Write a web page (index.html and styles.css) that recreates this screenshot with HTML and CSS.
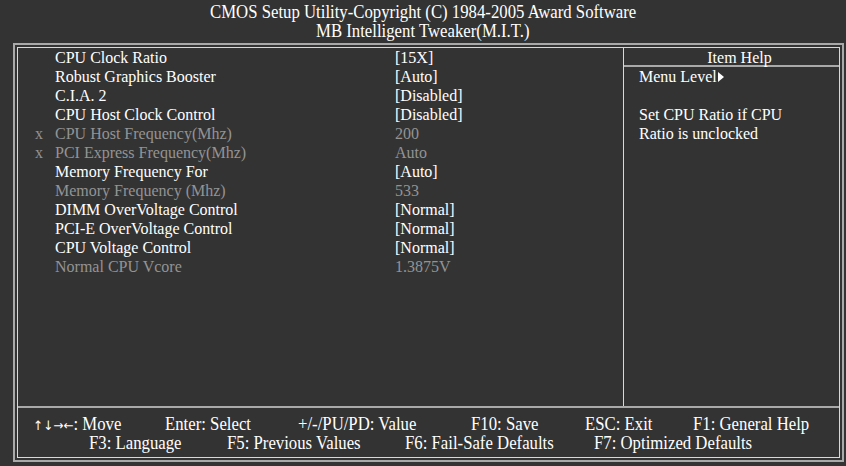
FILE: index.html
```html
<!DOCTYPE html>
<html>
<head>
<meta http-equiv="Content-Type" content="text/html; charset=utf-8"/>
<title>CMOS Setup Utility - MB Intelligent Tweaker(M.I.T.)</title>
<link rel="stylesheet" href="styles.css">
</head>
<body>

<div class="title">
  <div class="tline"><span>CMOS Setup Utility-Copyright (C) 1984-2005 Award Software</span></div>
  <div class="tline"><span>MB Intelligent Tweaker(M.I.T.)</span></div>
</div>

<div class="frame">
<div class="inner">

  <div class="main">
    <div class="items">
      <div class="row"><span class="mark"></span><span class="label">CPU Clock Ratio</span><span class="value">[15X]</span></div>
      <div class="row"><span class="mark"></span><span class="label">Robust Graphics Booster</span><span class="value">[Auto]</span></div>
      <div class="row"><span class="mark"></span><span class="label">C.I.A. 2</span><span class="value">[Disabled]</span></div>
      <div class="row"><span class="mark"></span><span class="label">CPU Host Clock Control</span><span class="value">[Disabled]</span></div>
      <div class="row off"><span class="mark">x</span><span class="label">CPU Host Frequency(Mhz)</span><span class="value">200</span></div>
      <div class="row off"><span class="mark">x</span><span class="label">PCI Express Frequency(Mhz)</span><span class="value">Auto</span></div>
      <div class="row"><span class="mark"></span><span class="label">Memory Frequency For</span><span class="value">[Auto]</span></div>
      <div class="row off"><span class="mark"></span><span class="label">Memory Frequency (Mhz)</span><span class="value">533</span></div>
      <div class="row"><span class="mark"></span><span class="label">DIMM OverVoltage Control</span><span class="value">[Normal]</span></div>
      <div class="row"><span class="mark"></span><span class="label">PCI-E OverVoltage Control</span><span class="value">[Normal]</span></div>
      <div class="row"><span class="mark"></span><span class="label">CPU Voltage Control</span><span class="value">[Normal]</span></div>
      <div class="row off"><span class="mark"></span><span class="label">Normal CPU Vcore</span><span class="value">1.3875V</span></div>
    </div>

    <div class="help">
      <div class="help-head">Item Help</div>
      <div class="help-body">
        <p>Menu Level<span class="tri"></span></p>
        <p>&nbsp;</p>
        <p>Set CPU Ratio if CPU</p>
        <p>Ratio is unclocked</p>
      </div>
    </div>
  </div>

  <div class="keys">
    <div class="kline k1">
      <span><span class="arrows">&uarr;&darr;&rarr;&larr;</span>: Move</span>
      <span>Enter: Select</span>
      <span>+/-/PU/PD: Value</span>
      <span>F10: Save</span>
      <span>ESC: Exit</span>
      <span>F1: General Help</span>
    </div>
    <div class="kline k2">
      <span>F3: Language</span>
      <span>F5: Previous Values</span>
      <span>F6: Fail-Safe Defaults</span>
      <span>F7: Optimized Defaults</span>
    </div>
  </div>

</div>
</div>

</body>
</html>
```

FILE: styles.css
```css
body {
   margin: 0;
   background-color: #333333;
   color: #ffffff;
   font-family: "Liberation Serif", "Times New Roman", serif;
   font-size: 16px;
   line-height: 19px;
   width: 846px;
   height: 466px;
   overflow: hidden;
}

/* title bar above the frame, narrow tall type */
.title {
   height: 43px;
   padding-top: 3px;
   box-sizing: border-box;
   text-align: center;
   font-size: 18px;
}

.tline {
   height: 19px;
}

.tline span {
   display: inline-block;
   transform: scaleX(0.93);
}

/* double border: grey outside, light inside */
.frame {
   margin: 0 2px 0 13px;
   border: 2px solid #a9a9a9;
   padding: 2px;
   height: 419px;
   box-sizing: border-box;
}

.inner {
   border: 1px solid #d8d8d8;
   height: 100%;
   box-sizing: border-box;
   display: flex;
   flex-direction: column;
}

.main {
   display: flex;
   height: 358px;
   border-bottom: 2px solid #a9a9a9;
}

.items {
   flex: 1;
}

.row {
   display: grid;
   grid-template-columns: 37px 340px 1fr;
   height: 19px;
}

.mark {
   padding-left: 17px;
}

.row.off {
   color: #939393;
}

.help {
   width: 215px;
   border-left: 1px solid #d8d8d8;
}

.help-head {
   text-align: center;
   padding-left: 16px;
   height: 17px;
   border-bottom: 2px solid #a9a9a9;
}

.help-body {
   padding-left: 15px;
}

.help-body p {
   margin: 0;
   height: 19px;
}

.tri {
   display: inline-block;
   width: 0;
   height: 0;
   margin-left: 1px;
   border-top: 5px solid transparent;
   border-bottom: 5px solid transparent;
   border-left: 6px solid #ffffff;
}

/* key legend at the bottom */
.keys {
   padding-top: 7px;
   font-size: 18px;
}

.kline {
   display: grid;
   height: 19px;
   white-space: nowrap;
}

.kline > span {
   display: inline-block;
   transform: scaleX(0.93);
   transform-origin: left center;
}

.arrows {
   font-family: "DejaVu Sans", sans-serif;
   font-size: 13px;
   letter-spacing: 0;
}

.k1 {
   padding-left: 15px;
   grid-template-columns: 132px 133px 173px 114px 108px 1fr;
}

.k2 {
   padding-left: 71px;
   grid-template-columns: 138px 178px 189px 1fr;
}
```
